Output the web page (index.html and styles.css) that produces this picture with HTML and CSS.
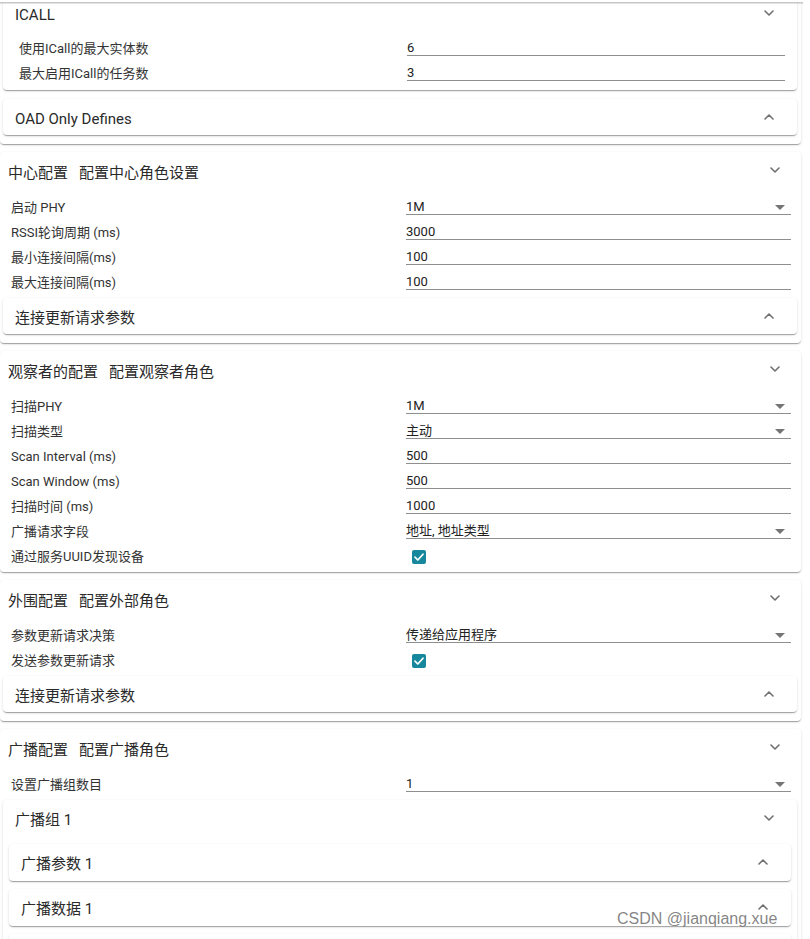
FILE: index.html
```html
<!DOCTYPE html>
<html lang="zh-CN">
<head>
<meta charset="utf-8">
<title>SysConfig</title>
<link rel="stylesheet" href="styles.css">
</head>
<body>
<div class="topbar"></div>
<main class="page">

  <section class="card card-first">
    <div class="sub sub-icall">
      <div class="sub-head"><span class="sub-title">ICALL</span>
        <svg class="chev" width="10" height="6" viewBox="0 0 10 6"><polyline points="1,1 5,5 9,1"/></svg></div>
      <div class="rows rows-sub">
        <div class="row"><span class="label">使用ICall的最大实体数</span><div class="field">6</div></div>
        <div class="row"><span class="label">最大启用ICall的任务数</span><div class="field">3</div></div>
      </div>
    </div>
    <div class="sub sub-gap">
      <div class="sub-head"><span class="sub-title">OAD Only Defines</span>
        <svg class="chev" width="10" height="6" viewBox="0 0 10 6"><polyline points="1,5 5,1 9,5"/></svg></div>
    </div>
  </section>

  <section class="card">
    <div class="card-head"><span class="title">中心配置</span><span class="desc">配置中心角色设置</span>
      <svg class="chev" width="10" height="6" viewBox="0 0 10 6"><polyline points="1,1 5,5 9,1"/></svg></div>
    <div class="rows">
      <div class="row"><span class="label">启动 PHY</span><div class="field select">1M<svg class="tri" width="10" height="5" viewBox="0 0 10 5"><path d="M0 0h10L5 5z"/></svg></div></div>
      <div class="row"><span class="label">RSSI轮询周期 (ms)</span><div class="field">3000</div></div>
      <div class="row"><span class="label">最小连接间隔(ms)</span><div class="field">100</div></div>
      <div class="row"><span class="label">最大连接间隔(ms)</span><div class="field">100</div></div>
    </div>
    <div class="sub sub-last">
      <div class="sub-head"><span class="sub-title">连接更新请求参数</span>
        <svg class="chev" width="10" height="6" viewBox="0 0 10 6"><polyline points="1,5 5,1 9,5"/></svg></div>
    </div>
  </section>

  <section class="card">
    <div class="card-head"><span class="title">观察者的配置</span><span class="desc">配置观察者角色</span>
      <svg class="chev" width="10" height="6" viewBox="0 0 10 6"><polyline points="1,1 5,5 9,1"/></svg></div>
    <div class="rows">
      <div class="row"><span class="label">扫描PHY</span><div class="field select">1M<svg class="tri" width="10" height="5" viewBox="0 0 10 5"><path d="M0 0h10L5 5z"/></svg></div></div>
      <div class="row"><span class="label">扫描类型</span><div class="field select">主动<svg class="tri" width="10" height="5" viewBox="0 0 10 5"><path d="M0 0h10L5 5z"/></svg></div></div>
      <div class="row"><span class="label">Scan Interval (ms)</span><div class="field">500</div></div>
      <div class="row"><span class="label">Scan Window (ms)</span><div class="field">500</div></div>
      <div class="row"><span class="label">扫描时间 (ms)</span><div class="field">1000</div></div>
      <div class="row"><span class="label">广播请求字段</span><div class="field select">地址, 地址类型<svg class="tri" width="10" height="5" viewBox="0 0 10 5"><path d="M0 0h10L5 5z"/></svg></div></div>
      <div class="row"><span class="label">通过服务UUID发现设备</span><div class="check-cell"><span class="checkbox"><svg width="14" height="14" viewBox="0 0 14 14"><polyline points="3,7.2 5.8,10 11,4.2"/></svg></span></div></div>
    </div>
  </section>

  <section class="card">
    <div class="card-head"><span class="title">外围配置</span><span class="desc">配置外部角色</span>
      <svg class="chev" width="10" height="6" viewBox="0 0 10 6"><polyline points="1,1 5,5 9,1"/></svg></div>
    <div class="rows">
      <div class="row"><span class="label">参数更新请求决策</span><div class="field select">传递给应用程序<svg class="tri" width="10" height="5" viewBox="0 0 10 5"><path d="M0 0h10L5 5z"/></svg></div></div>
      <div class="row"><span class="label">发送参数更新请求</span><div class="check-cell"><span class="checkbox"><svg width="14" height="14" viewBox="0 0 14 14"><polyline points="3,7.2 5.8,10 11,4.2"/></svg></span></div></div>
    </div>
    <div class="sub sub-last">
      <div class="sub-head"><span class="sub-title">连接更新请求参数</span>
        <svg class="chev" width="10" height="6" viewBox="0 0 10 6"><polyline points="1,5 5,1 9,5"/></svg></div>
    </div>
  </section>

  <section class="card">
    <div class="card-head"><span class="title">广播配置</span><span class="desc">配置广播角色</span>
      <svg class="chev" width="10" height="6" viewBox="0 0 10 6"><polyline points="1,1 5,5 9,1"/></svg></div>
    <div class="rows">
      <div class="row"><span class="label">设置广播组数目</span><div class="field select">1<svg class="tri" width="10" height="5" viewBox="0 0 10 5"><path d="M0 0h10L5 5z"/></svg></div></div>
    </div>
    <div class="sub">
      <div class="sub-head"><span class="sub-title">广播组 1</span>
        <svg class="chev" width="10" height="6" viewBox="0 0 10 6"><polyline points="1,1 5,5 9,1"/></svg></div>
      <div class="nested">
        <div class="sub sub-nested">
          <div class="sub-head"><span class="sub-title">广播参数 1</span>
            <svg class="chev" width="10" height="6" viewBox="0 0 10 6"><polyline points="1,5 5,1 9,5"/></svg></div>
        </div>
        <div class="sub sub-nested">
          <div class="sub-head"><span class="sub-title">广播数据 1</span>
            <svg class="chev" width="10" height="6" viewBox="0 0 10 6"><polyline points="1,5 5,1 9,5"/></svg></div>
        </div>
        <div class="sub sub-nested">
          <div class="sub-head"></div>
        </div>
      </div>
    </div>
  </section>

</main>
<div class="watermark">CSDN @jianqiang.xue</div>
</body>
</html>
```

FILE: styles.css
```css
html, body {
  margin: 0;
  padding: 0;
  background: #ffffff;
  overflow: hidden;
}

body {
  font-family: Roboto, "Noto Sans CJK SC", "Noto Sans", sans-serif;
  color: #222222;
  width: 810px;
  height: 939px;
  position: relative;
}

.topbar {
  position: absolute;
  top: 0;
  left: 0;
  width: 803px;
  height: 2px;
  background: #ffffff;
  border-bottom: 1px solid #c6c6c6;
  box-shadow: 0 1px 1px rgba(0, 0, 0, 0.12);
  z-index: 5;
}

.page {
  width: 801px;
  display: flex;
  flex-direction: column;
  gap: 8px;
}

.card {
  background: #ffffff;
  border-radius: 4px;
  box-shadow: 0 2px 1px -1px rgba(0, 0, 0, 0.2), 0 1px 1px 0 rgba(0, 0, 0, 0.14), 0 1px 3px 0 rgba(0, 0, 0, 0.12);
  display: flex;
  flex-direction: column;
}

.card-first {
  margin-top: -13px;
  padding-top: 8px;
}

.card-head {
  height: 43px;
  display: flex;
  align-items: flex-start;
  padding: 0 21px 0 8px;
}

.card-head .title,
.card-head .desc {
  font-size: 15px;
  line-height: 43px;
  color: #2a2a2a;
}

.card-head .desc {
  margin-left: 11px;
}

.chev {
  margin-left: auto;
  fill: none;
  stroke: #6f6f6f;
  stroke-width: 1.6;
  stroke-linecap: round;
  stroke-linejoin: round;
}

.card-head .chev {
  margin-top: 15px;
}

.rows {
  display: flex;
  flex-direction: column;
  padding: 0 10px 3px 11px;
}

.row {
  display: grid;
  grid-template-columns: 395px 1fr;
  height: 25px;
  align-items: start;
}

.label {
  font-size: 13px;
  line-height: 25px;
  color: #333333;
  white-space: nowrap;
}

.field {
  height: 20px;
  box-sizing: border-box;
  border-bottom: 1px solid #8e8e8e;
  font-size: 13px;
  line-height: 24px;
  color: #222222;
  display: flex;
  align-items: flex-start;
}

.field.select {
  padding-right: 6px;
}

.tri {
  margin-left: auto;
  margin-top: 10px;
  fill: #757575;
}

.check-cell {
  display: flex;
  align-items: center;
  height: 25px;
  padding-left: 6px;
}

.checkbox {
  width: 14px;
  height: 14px;
  border-radius: 2px;
  background: #17889b;
  display: flex;
  margin-top: 1px;
}

.checkbox svg {
  fill: none;
  stroke: #ffffff;
  stroke-width: 1.7;
  stroke-linecap: round;
  stroke-linejoin: round;
}

.sub {
  background: #ffffff;
  border-radius: 4px;
  margin: 0 4px 0 3px;
  box-shadow: 0 2px 1px -1px rgba(0, 0, 0, 0.2), 0 1px 1px 0 rgba(0, 0, 0, 0.14), 0 1px 3px 0 rgba(0, 0, 0, 0.12);
  display: flex;
  flex-direction: column;
}

.sub-last {
  margin-bottom: 9px;
}

.sub-gap {
  margin-top: 9px;
  margin-bottom: 9px;
}

.sub-head {
  height: 36px;
  display: flex;
  align-items: flex-start;
  padding: 0 23px 0 12px;
}

.sub-title {
  font-size: 15px;
  line-height: 40px;
  color: #2a2a2a;
  white-space: nowrap;
}

.sub-head .chev {
  margin-top: 15px;
}

.rows-sub {
  padding: 5px 12px 4px 16px;
}

.rows-sub .row {
  grid-template-columns: 388px 1fr;
}

.nested {
  display: flex;
  flex-direction: column;
  gap: 8px;
  padding: 8px 0 8px 0;
}

.sub-nested {
  margin: 0 6px;
}

.sub-nested .sub-head {
  height: 37px;
}

.watermark {
  position: absolute;
  left: 617px;
  top: 908px;
  font-family: "Liberation Sans", Arial, sans-serif;
  font-size: 16px;
  line-height: 22px;
  color: rgba(110, 110, 110, 0.85);
  text-shadow: 0 0 1px rgba(255, 255, 255, 0.8);
  z-index: 6;
}
```
